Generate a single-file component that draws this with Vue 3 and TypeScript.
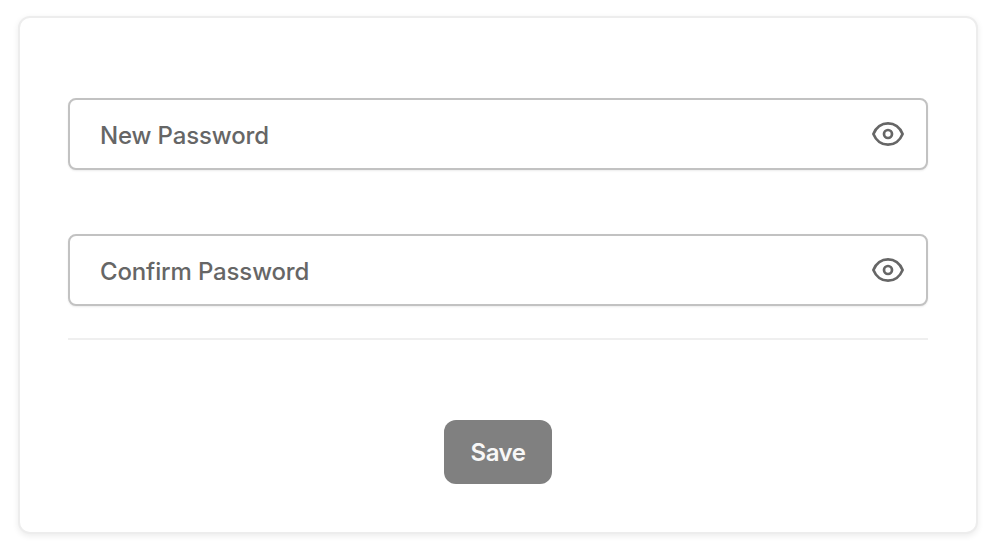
<script setup lang="ts">
const fields: string[] = ['New Password', 'Confirm Password']
</script>

<template>
  <div class="page">
    <form class="card" @submit.prevent>
      <label v-for="f in fields" :key="f" class="field">
        <input class="input" type="password" :placeholder="f" />
        <svg class="eye" viewBox="0 0 32 32" fill="none" stroke="currentColor" stroke-width="2.7" stroke-linecap="round" stroke-linejoin="round">
          <path d="M1.400 16C4 9.400 9.600 5.300 16 5.300S28 9.400 30.600 16C28 22.600 22.400 26.700 16 26.700S4 22.600 1.400 16Z" />
          <circle cx="16" cy="16" r="4" />
        </svg>
      </label>
      <hr class="divider" />
      <div class="actions"><button class="save" type="submit">Save</button></div>
    </form>
  </div>
</template>

<style scoped>
.page { width: 994px; height: 554px; padding: 16px 16px 20px 18px; box-sizing: border-box; background: #fff; font-family: Inter, "Liberation Sans", sans-serif; }
.card { box-sizing: border-box; width: 960px; height: 518px; padding: 80px 48px 0 48px; border: 2px solid #ededed; border-radius: 12px; background: #fff; box-shadow: 0 2px 6px rgba(0,0,0,.08); }
.field { position: relative; display: block; height: 72px; margin-bottom: 64px; }
.input { box-sizing: border-box; width: 100%; height: 100%; padding: 2px 70px 0 30px; border: 2px solid #c2c2c2; border-radius: 8px; outline: none; font: 500 24px Inter, sans-serif; letter-spacing: -0.14px; color: #666; box-shadow: 0 1px 2px rgba(0,0,0,.08); background: #fff; }
.input::placeholder { color: #666; opacity: 1; }
.eye { position: absolute; right: 23px; top: 20px; width: 34px; height: 32px; color: #666; }
.divider { height: 2px; border: 0; margin: -32px 0 0; background: #efefef; }
.actions { display: flex; justify-content: center; margin-top: 80px; }
.save { width: 108px; height: 64px; border: 0; border-radius: 12px; background: #808080; color: #f7f7f7; font: 600 24px Inter, sans-serif; letter-spacing: -0.45px; }
</style>
